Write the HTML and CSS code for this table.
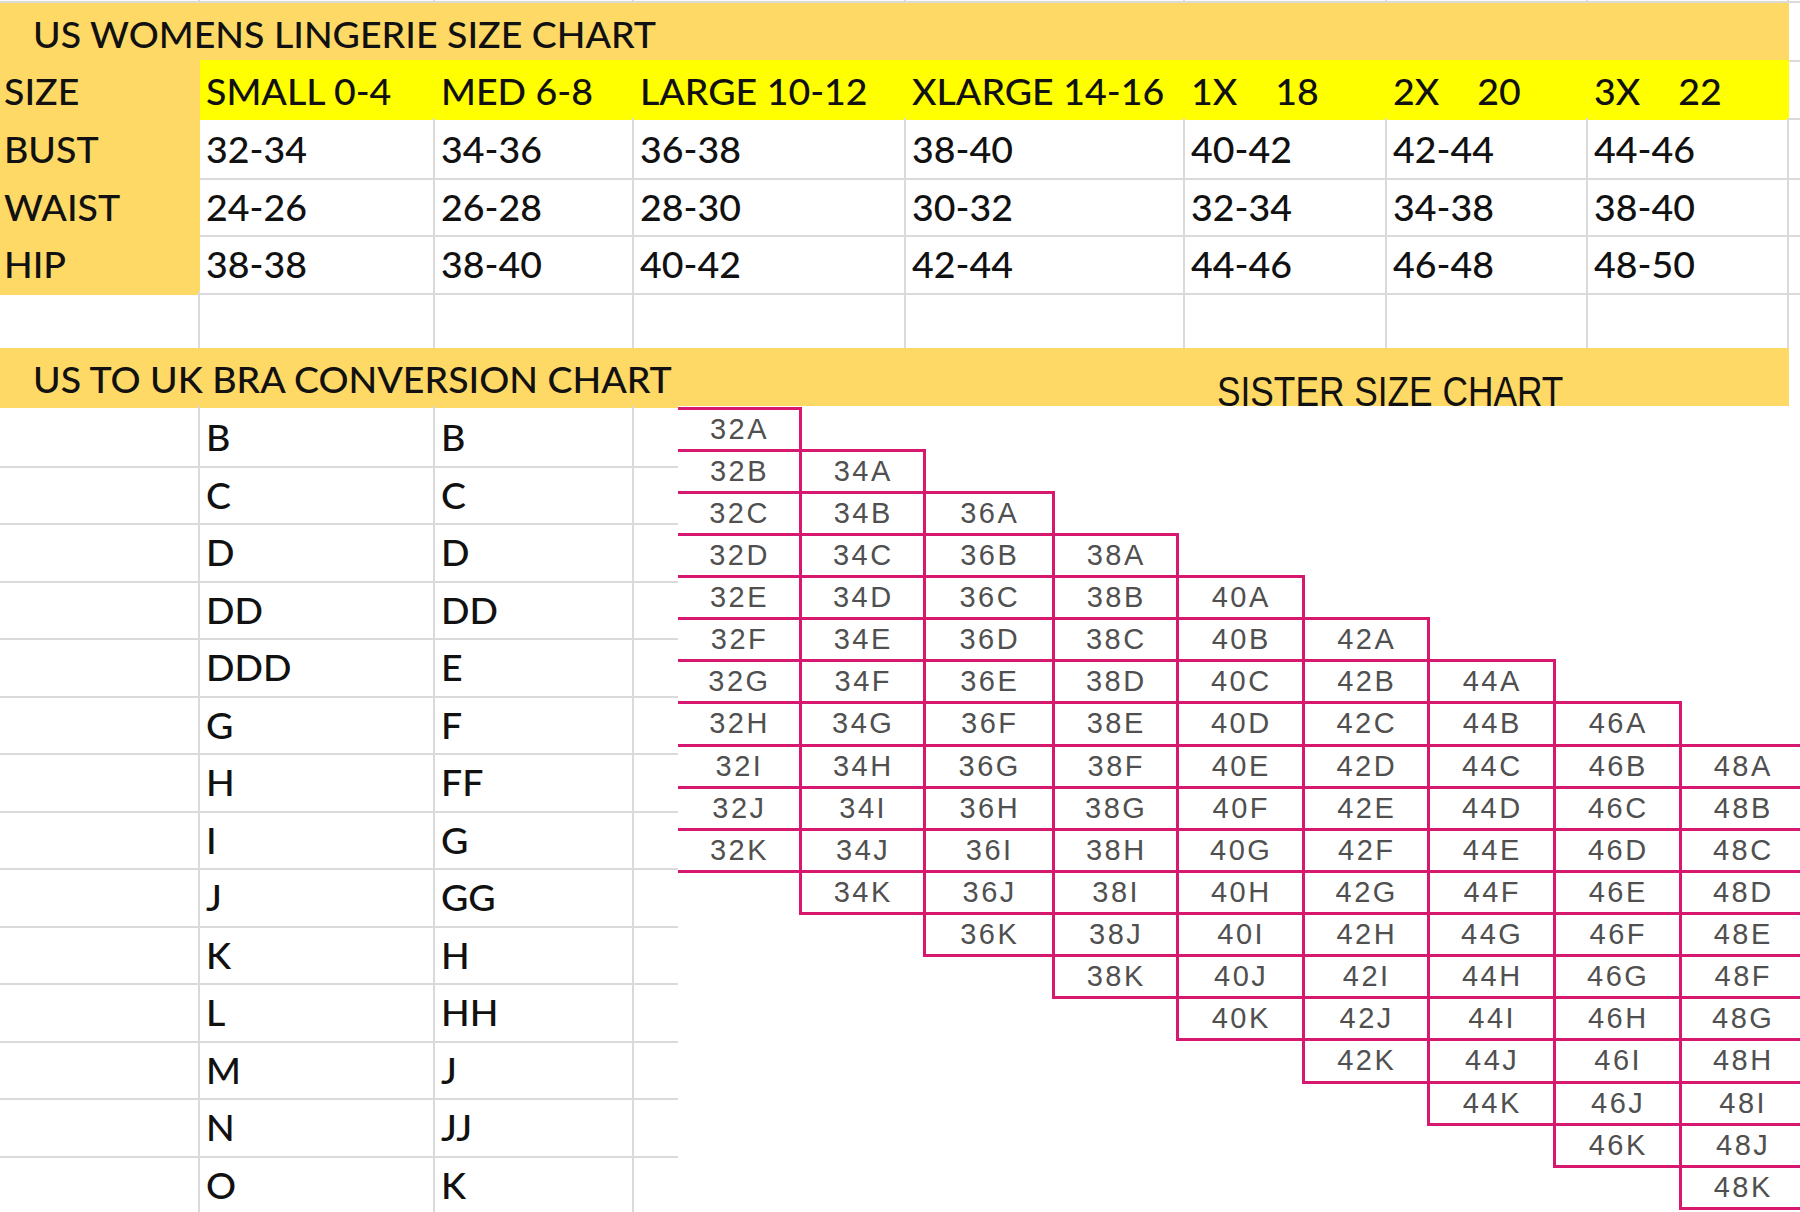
FILE: index.html
```html
<!DOCTYPE html>
<html>
<head>
<meta charset="utf-8">
<title>US Womens Lingerie Size Chart</title>
<link rel="stylesheet" href="styles.css">
</head>
<body>
<div class="sheet">
  <div class="row strip"><div></div><div></div><div></div><div></div><div></div><div></div><div></div><div></div><div class="edge"></div></div>

  <div class="row h57"><div class="band">US WOMENS LINGERIE SIZE CHART</div><div class="edge"></div></div>

  <div class="row h58">
    <div class="lab">SIZE</div>
    <div class="yel">SMALL 0-4</div><div class="yel">MED 6-8</div><div class="yel">LARGE 10-12</div><div class="yel">XLARGE 14-16</div>
    <div class="yel">1X    18</div><div class="yel">2X    20</div><div class="yel">3X    22</div>
    <div class="edge"></div>
  </div>

  <div class="row h58">
    <div class="lab">BUST</div>
    <div>32-34</div><div>34-36</div><div>36-38</div><div>38-40</div><div>40-42</div><div>42-44</div><div>44-46</div>
    <div class="edge"></div>
  </div>

  <div class="row h57">
    <div class="lab">WAIST</div>
    <div>24-26</div><div>26-28</div><div>28-30</div><div>30-32</div><div>32-34</div><div>34-38</div><div>38-40</div>
    <div class="edge"></div>
  </div>

  <div class="row h58">
    <div class="lab">HIP</div>
    <div>38-38</div><div>38-40</div><div>40-42</div><div>42-44</div><div>44-46</div><div>46-48</div><div>48-50</div>
    <div class="edge"></div>
  </div>

  <div class="row h57 blank"><div></div><div></div><div></div><div></div><div></div><div></div><div></div><div></div><div class="edge"></div></div>

  <div class="row h58"><div class="band">US TO UK BRA CONVERSION CHART</div><div class="edge"></div></div>

  <div class="row lower"><div></div><div>B</div><div>B</div><div></div><div></div><div></div><div></div><div></div><div class="edge"></div></div>
  <div class="row lower"><div></div><div>C</div><div>C</div><div></div><div></div><div></div><div></div><div></div><div class="edge"></div></div>
  <div class="row lower"><div></div><div>D</div><div>D</div><div></div><div></div><div></div><div></div><div></div><div class="edge"></div></div>
  <div class="row lower"><div></div><div>DD</div><div>DD</div><div></div><div></div><div></div><div></div><div></div><div class="edge"></div></div>
  <div class="row lower"><div></div><div>DDD</div><div>E</div><div></div><div></div><div></div><div></div><div></div><div class="edge"></div></div>
  <div class="row lower"><div></div><div>G</div><div>F</div><div></div><div></div><div></div><div></div><div></div><div class="edge"></div></div>
  <div class="row lower"><div></div><div>H</div><div>FF</div><div></div><div></div><div></div><div></div><div></div><div class="edge"></div></div>
  <div class="row lower"><div></div><div>I</div><div>G</div><div></div><div></div><div></div><div></div><div></div><div class="edge"></div></div>
  <div class="row lower"><div></div><div>J</div><div>GG</div><div></div><div></div><div></div><div></div><div></div><div class="edge"></div></div>
  <div class="row lower"><div></div><div>K</div><div>H</div><div></div><div></div><div></div><div></div><div></div><div class="edge"></div></div>
  <div class="row lower"><div></div><div>L</div><div>HH</div><div></div><div></div><div></div><div></div><div></div><div class="edge"></div></div>
  <div class="row lower"><div></div><div>M</div><div>J</div><div></div><div></div><div></div><div></div><div></div><div class="edge"></div></div>
  <div class="row lower"><div></div><div>N</div><div>JJ</div><div></div><div></div><div></div><div></div><div></div><div class="edge"></div></div>
  <div class="row lower"><div></div><div>O</div><div>K</div><div></div><div></div><div></div><div></div><div></div><div class="edge"></div></div>
</div>

<div class="sister-title">SISTER SIZE CHART</div>

<div class="sister">
  <div class="stairs">
    <div class="scol" style="--i:0"><div class="k">32A</div><div class="k">32B</div><div class="k">32C</div><div class="k">32D</div><div class="k">32E</div><div class="k">32F</div><div class="k">32G</div><div class="k">32H</div><div class="k">32I</div><div class="k">32J</div><div class="k">32K</div></div>
    <div class="scol" style="--i:1"><div class="k">34A</div><div class="k">34B</div><div class="k">34C</div><div class="k">34D</div><div class="k">34E</div><div class="k">34F</div><div class="k">34G</div><div class="k">34H</div><div class="k">34I</div><div class="k">34J</div><div class="k">34K</div></div>
    <div class="scol" style="--i:2"><div class="k">36A</div><div class="k">36B</div><div class="k">36C</div><div class="k">36D</div><div class="k">36E</div><div class="k">36F</div><div class="k">36G</div><div class="k">36H</div><div class="k">36I</div><div class="k">36J</div><div class="k">36K</div></div>
    <div class="scol" style="--i:3"><div class="k">38A</div><div class="k">38B</div><div class="k">38C</div><div class="k">38D</div><div class="k">38E</div><div class="k">38F</div><div class="k">38G</div><div class="k">38H</div><div class="k">38I</div><div class="k">38J</div><div class="k">38K</div></div>
    <div class="scol" style="--i:4"><div class="k">40A</div><div class="k">40B</div><div class="k">40C</div><div class="k">40D</div><div class="k">40E</div><div class="k">40F</div><div class="k">40G</div><div class="k">40H</div><div class="k">40I</div><div class="k">40J</div><div class="k">40K</div></div>
    <div class="scol" style="--i:5"><div class="k">42A</div><div class="k">42B</div><div class="k">42C</div><div class="k">42D</div><div class="k">42E</div><div class="k">42F</div><div class="k">42G</div><div class="k">42H</div><div class="k">42I</div><div class="k">42J</div><div class="k">42K</div></div>
    <div class="scol" style="--i:6"><div class="k">44A</div><div class="k">44B</div><div class="k">44C</div><div class="k">44D</div><div class="k">44E</div><div class="k">44F</div><div class="k">44G</div><div class="k">44H</div><div class="k">44I</div><div class="k">44J</div><div class="k">44K</div></div>
    <div class="scol" style="--i:7"><div class="k">46A</div><div class="k">46B</div><div class="k">46C</div><div class="k">46D</div><div class="k">46E</div><div class="k">46F</div><div class="k">46G</div><div class="k">46H</div><div class="k">46I</div><div class="k">46J</div><div class="k">46K</div></div>
    <div class="scol" style="--i:8"><div class="k">48A</div><div class="k">48B</div><div class="k">48C</div><div class="k">48D</div><div class="k">48E</div><div class="k">48F</div><div class="k">48G</div><div class="k">48H</div><div class="k">48I</div><div class="k">48J</div><div class="k">48K</div></div>
  </div>
</div>
</body>
</html>
```

FILE: styles.css
```css
* {
  box-sizing: border-box;
  margin: 0;
  padding: 0;
}

html,
body {
  width: 1800px;
  height: 1212px;
  overflow: hidden;
  background: #ffffff;
}

body {
  position: relative;
  font-family: Lato, "Liberation Sans", sans-serif;
  color: #111111;
}

.sheet {
  width: 1800px;
}

.row {
  display: grid;
  grid-template-columns: 200px 235px 199px 272px 279px 202px 201px 201px 11px;
  height: 57.5px;
  line-height: 57.5px;
  font-size: 37.5px;
  font-weight: 500;
}

.row > div {
  border-right: 2px solid #dadada;
  border-bottom: 2px solid #dadada;
  padding-left: 6px;
  padding-top: 2px;
  white-space: pre;
}

.row.strip {
  height: 3px;
  line-height: 3px;
}

.row.strip > div {
  padding-top: 0;
}

.row.h57 {
  height: 57px;
  line-height: 57px;
}

.row.h58 {
  height: 58px;
  line-height: 58px;
}

.row.blank > div {
  border-bottom: none;
}

.row > .edge {
  border-right: none;
}

.row > .band {
  grid-column: 1 / 9;
  background: #ffd966;
  border: none;
  padding-left: 33px;
}

.row > .lab {
  background: #ffd966;
  border: none;
  padding-left: 4px;
}

.row > .yel {
  background: #ffff00;
  border: none;
}

/* Sister size chart: pasted picture laid over the sheet */
.sister-title {
  position: absolute;
  left: 1217px;
  top: 371px;
  font-family: "Liberation Sans", Arial, sans-serif;
  font-size: 42px;
  line-height: 42px;
  color: #111111;
  white-space: nowrap;
  transform: scaleX(0.84);
  transform-origin: left top;
}

.sister {
  position: absolute;
  left: 678px;
  top: 406px;
  width: 1122px;
  height: 806px;
  background: #ffffff;
  overflow: hidden;
}

.stairs {
  display: grid;
  grid-template-columns: 122px 124px 129px 124px 126px 125px 126px 126px 124px;
  padding-top: 2px;
  align-items: start;
}

.scol {
  display: flex;
  flex-direction: column;
  margin-top: calc(var(--i) * 42.14px);
}

.k {
  height: 45.14px;
  margin: -1.5px;
  border: 3px solid #d6186e;
  font-family: "Liberation Sans", Arial, sans-serif;
  font-size: 29px;
  line-height: 39px;
  letter-spacing: 2.5px;
  text-indent: 2.5px;
  color: #505050;
  text-align: center;
}

.scol:first-child .k {
  border-left: none;
  margin-left: 0;
}
```
